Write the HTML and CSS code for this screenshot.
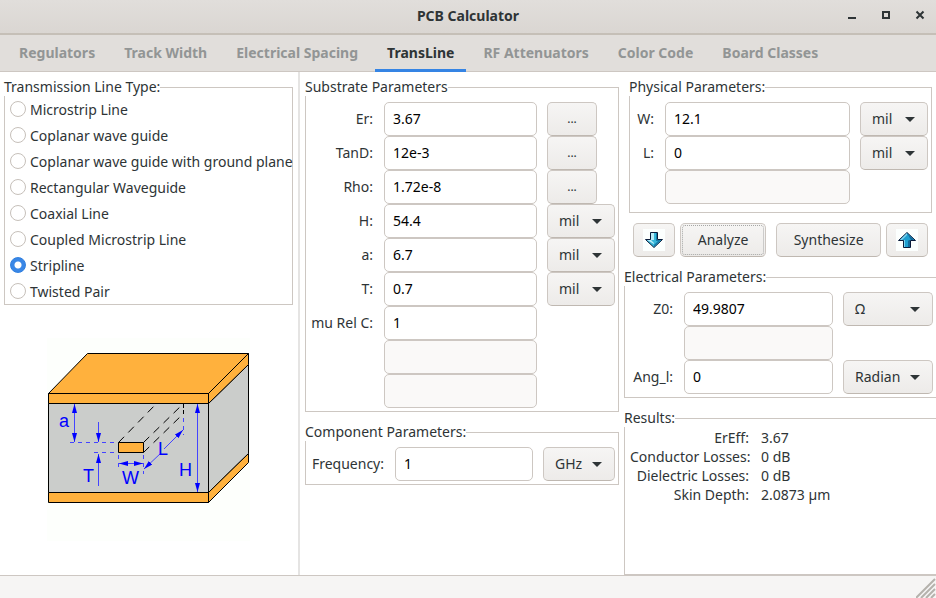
FILE: index.html
```html
<!DOCTYPE html>
<html lang="en">
<head>
<meta charset="utf-8">
<title>PCB Calculator</title>
<link rel="stylesheet" href="styles.css">
</head>
<body>
<header class="titlebar">
  <h1 class="title">PCB Calculator</h1>
  <div class="window-buttons">
    <button type="button" class="window-button" aria-label="Minimize"><svg width="10" height="10" viewBox="0 0 10 10"><path d="M1 7h8v2H1z"/></svg></button>
    <button type="button" class="window-button" aria-label="Maximize"><svg width="10" height="10" viewBox="0 0 10 10"><path fill-rule="evenodd" d="M1 1h8v8H1zM3 3v4h4V3z"/></svg></button>
    <button type="button" class="window-button" aria-label="Close"><svg width="10" height="10" viewBox="0 0 10 10"><path d="M1.500 1.500l7 7M8.500 1.500l-7 7" stroke="#2e3436" stroke-width="2"/></svg></button>
  </div>
</header>
<nav class="tabs">
  <a class="tab" href="#">Regulators</a>
  <a class="tab" href="#">Track Width</a>
  <a class="tab" href="#">Electrical Spacing</a>
  <a class="tab active" href="#" aria-current="page">TransLine</a>
  <a class="tab" href="#">RF Attenuators</a>
  <a class="tab" href="#">Color Code</a>
  <a class="tab" href="#">Board Classes</a>
</nav>
<main class="content">
  <section class="pane type-pane">
    <fieldset class="group">
      <legend>Transmission Line Type:</legend>
      <div class="radios">
        <label class="radio"><input type="radio" name="line">Microstrip Line</label>
        <label class="radio"><input type="radio" name="line">Coplanar wave guide</label>
        <label class="radio"><input type="radio" name="line">Coplanar wave guide with ground plane</label>
        <label class="radio"><input type="radio" name="line">Rectangular Waveguide</label>
        <label class="radio"><input type="radio" name="line">Coaxial Line</label>
        <label class="radio"><input type="radio" name="line">Coupled Microstrip Line</label>
        <label class="radio"><input type="radio" name="line" checked>Stripline</label>
        <label class="radio"><input type="radio" name="line">Twisted Pair</label>
      </div>
    </fieldset>
    <svg class="diagram" width="203" height="203" viewBox="0 0 203 203" role="img" aria-label="Stripline cross-section">
      <defs>
        <marker id="tip" viewBox="0 0 9 5" refX="9" refY="2.5" markerWidth="9" markerHeight="5" markerUnits="userSpaceOnUse" orient="auto-start-reverse"><path d="M0 0l9 2.500-9 2.500z" fill="#00f"/></marker>
      </defs>
      <path fill="#fdfffc" d="M0 0h203v203H0z"/>
      <g stroke="#000" stroke-linejoin="round">
        <path fill="#cbcdcb" d="M1.500 65.500h160v89H1.500zM161.500 65.500l40-39v89l-40 39z"/>
        <path fill="#ffb13d" d="M1.500 55.500l39-40h161l-40 40zM1.500 55.500h160v10H1.500zM161.500 55.500l40-40v11l-40 39zM1.500 154.500h160v10H1.500zM161.500 154.500l40-39v9l-40 40zM71.500 104.500h25v10h-25z"/>
        <path fill="none" stroke-dasharray="8 6" d="M71.500 104.500l38-39M96.500 104.500l40-39M96.500 114.500l40-39"/>
        <path fill="none" stroke-dasharray="4 2" d="M136.500 66v11"/>
      </g>
      <g stroke="#44f" fill="none">
        <path stroke-dasharray="4 4" d="M23 104.500h48M47 114.500h24M71.500 117v12M96.500 117v19M136.500 80v17"/>
        <path marker-start="url(#tip)" marker-end="url(#tip)" d="M27.500 66v38"/>
        <path marker-start="url(#tip)" marker-end="url(#tip)" d="M72 125.500h24"/>
        <path marker-start="url(#tip)" marker-end="url(#tip)" d="M150.500 66v88"/>
        <path marker-start="url(#tip)" d="M97 131l17-16"/>
        <path marker-end="url(#tip)" d="M117 111l19-19"/>
        <path marker-end="url(#tip)" d="M51.500 84v20"/>
        <path marker-end="url(#tip)" d="M51.500 148v-32"/>
      </g>
      <g class="diagram-text">
        <text x="12" y="89">a</text>
        <text x="36" y="144">T</text>
        <text x="75" y="146">W</text>
        <text x="111" y="117">L</text>
        <text x="132" y="138">H</text>
      </g>
    </svg>
  </section>

  <section class="pane">
    <fieldset class="group">
      <legend>Substrate Parameters</legend>
      <div class="rows substrate">
        <label for="er">Er:</label><input id="er" type="text" value="3.67"><button type="button" class="button more" aria-label="Er values">...</button>
        <label for="tand">TanD:</label><input id="tand" type="text" value="12e-3"><button type="button" class="button more" aria-label="TanD values">...</button>
        <label for="rho">Rho:</label><input id="rho" type="text" value="1.72e-8"><button type="button" class="button more" aria-label="Rho values">...</button>
        <label for="h">H:</label><input id="h" type="text" value="54.4"><span class="select"><select aria-label="H unit"><option>mil</option></select></span>
        <label for="a">a:</label><input id="a" type="text" value="6.7"><span class="select"><select aria-label="a unit"><option>mil</option></select></span>
        <label for="t">T:</label><input id="t" type="text" value="0.7"><span class="select"><select aria-label="T unit"><option>mil</option></select></span>
        <label for="mu">mu Rel C:</label><input id="mu" type="text" value="1">
        <input class="unlabelled" type="text" disabled aria-label="Unused substrate parameter 1">
        <input class="unlabelled" type="text" disabled aria-label="Unused substrate parameter 2">
      </div>
    </fieldset>
    <fieldset class="group">
      <legend>Component Parameters:</legend>
      <div class="rows component">
        <label for="freq">Frequency:</label><input id="freq" type="text" value="1"><span class="select"><select aria-label="Frequency unit"><option>GHz</option></select></span>
      </div>
    </fieldset>
  </section>

  <section class="pane">
    <div class="inset">
      <fieldset class="group">
        <legend>Physical Parameters:</legend>
        <div class="rows physical">
          <label for="w">W:</label><input id="w" type="text" value="12.1"><span class="select"><select aria-label="W unit"><option>mil</option></select></span>
          <label for="l">L:</label><input id="l" type="text" value="0"><span class="select"><select aria-label="L unit"><option>mil</option></select></span>
          <input class="unlabelled" type="text" disabled aria-label="Unused physical parameter">
        </div>
      </fieldset>
      <div class="actions">
        <button type="button" class="button arrow" aria-label="Analyze down"><svg width="22" height="22" viewBox="0 0 22 22"><path fill="#fcfffe" d="M0 0h22v22H0z"/><path fill="#35b6d8" stroke="#0a1a3a" d="M7.500 3.500h7v7h5l-8.500 8-8.500-8h5z"/><path fill="#b8ecf8" d="M8 4h3v7H8zM4 11h4l3 3v1z"/><path fill="#1479a8" d="M13 4h1v7h4l-7 7v-2l4-4h-2z"/></svg></button>
        <button type="button" class="button analyze">Analyze</button>
        <button type="button" class="button synthesize">Synthesize</button>
        <button type="button" class="button arrow" aria-label="Synthesize up"><svg width="22" height="22" viewBox="0 0 22 22"><path fill="#fcfffe" d="M0 0h22v22H0z"/><path fill="#1e9fd0" stroke="#0a1a3a" d="M7.500 18.500h7v-7h5l-8.500-8-8.500 8h5z"/><path fill="#7fd3ee" d="M8 11h1v7H8zM11 4v2l-5 5H4z"/><path fill="#126a9c" d="M13 11h1v7h-2v-6zM11 4l7 7h-3z"/></svg></button>
      </div>
    </div>
    <fieldset class="group open">
      <legend>Electrical Parameters:</legend>
      <div class="rows electrical">
        <label for="z0">Z0:</label><input id="z0" type="text" value="49.9807"><span class="select"><select aria-label="Z0 unit"><option>Ω</option></select></span>
        <input class="unlabelled" type="text" disabled aria-label="Unused electrical parameter">
        <label for="ang">Ang_l:</label><input id="ang" type="text" value="0"><span class="select"><select aria-label="Ang_l unit"><option>Radian</option></select></span>
      </div>
    </fieldset>
    <fieldset class="group open results">
      <legend>Results:</legend>
      <dl>
        <dt>ErEff:</dt><dd>3.67</dd>
        <dt>Conductor Losses:</dt><dd>0 dB</dd>
        <dt>Dielectric Losses:</dt><dd>0 dB</dd>
        <dt>Skin Depth:</dt><dd>2.0873 µm</dd>
      </dl>
    </fieldset>
  </section>
</main>
<footer class="statusbar">
  <svg width="20" height="20" viewBox="0 0 20 20" aria-hidden="true"><path d="M0 20L19 1M5 20L19 6M10 20l9-9M15 20l4-4" stroke="#b5b2ac" stroke-width="2"/></svg>
</footer>
</body>
</html>
```
FILE: styles.css
```css
* { box-sizing: border-box; }

body {
  margin: 0;
  min-height: 100vh;
  display: flex;
  flex-direction: column;
  background: #fff;
  color: #2e3436;
  font: 14px/17px "Noto Sans", "Open Sans", sans-serif;
}

input, select, button { font: inherit; color: inherit; margin: 0; }

.titlebar {
  position: relative;
  display: flex;
  align-items: center;
  justify-content: center;
  height: 35px;
  padding-bottom: 2px;
  background: linear-gradient(#e1dedb, #dad6d2);
  border-bottom: 2px solid #c5bfb7;
}
.title { margin: 0; font-size: 14px; }
.window-buttons {
  position: absolute;
  right: 6px;
  top: 5px;
  display: flex;
  gap: 14px;
}
.window-button {
  display: grid;
  place-items: center;
  width: 20px;
  height: 20px;
  padding: 0;
  border: 0;
  background: none;
}
.window-button svg { fill: #2e3436; }

.tabs {
  display: flex;
  gap: 5px;
  height: 37px;
  padding-left: 7px;
  background: #e1dedb;
  border-bottom: 1px solid #cdc7c2;
}
.tab {
  height: 37px;
  padding: 9px 12px 0;
  color: #929595;
  font-weight: bold;
  text-decoration: none;
  white-space: nowrap;
}
.tab.active { color: #2e3436; border-bottom: 3px solid #3584e4; }

.content {
  flex: 1;
  display: grid;
  grid-template-columns: 300px minmax(0, 314fr) minmax(0, 312fr);
  column-gap: 5px;
}
.pane {
  display: flex;
  flex-direction: column;
  gap: 12px;
  padding-top: 7px;
}
.type-pane {
  gap: 33px;
  padding-left: 4px;
  padding-right: 5px;
  border-right: 2px solid #e5e4e3;
}

.group {
  min-width: 0;
  margin: 0;
  padding: 0;
  border: 1px solid #cdc7c2;
}
.group legend {
  margin-left: -1px;
  padding: 0 0 2px;
  line-height: 15px;
  background: #fff;
}
.group.open { border-right: 0; }

.radio {
  display: flex;
  align-items: center;
  gap: 4px;
  height: 26px;
  padding-left: 5px;
  white-space: nowrap;
}
.radio input {
  appearance: none;
  flex: none;
  width: 16px;
  height: 16px;
  border: 1px solid #c6c0ba;
  border-radius: 50%;
  background: #fff;
}
.radio input:checked {
  border-color: #2f7fe0;
  background: radial-gradient(circle, #fff 3px, #3a87e6 4px);
}

.diagram { align-self: center; }
.diagram-text { fill: #00f; font: 18px "Liberation Sans", sans-serif; }

.rows {
  display: grid;
  column-gap: 10px;
  grid-auto-rows: 34px;
  align-items: center;
  padding: 6px 3px 3px 5px;
}
.rows label { grid-column: 1; text-align: right; white-space: nowrap; padding: 0 1px 2px 0; }
.unlabelled { grid-column: 2; }
.substrate { grid-template-columns: 63px minmax(0, 1fr) 68px; }
.component { grid-template-columns: 74px minmax(0, 1fr) 72px; }
.physical { grid-template-columns: 20px minmax(0, 1fr) 68px; padding-bottom: 8px; }
.electrical { grid-template-columns: 44px minmax(0, 1fr) 90px; }

.rows input {
  width: 100%;
  height: 34px;
  padding: 0 8px 2px;
  border: 1px solid #cdc7c2;
  border-radius: 5px;
  background: #fff;
  color: #000;
}
.rows input:disabled { background: #faf9f8; }

.button, .select select {
  height: 34px;
  padding: 0 11px 1px;
  border: 1px solid #cdc7c2;
  border-bottom-color: #bfb8b1;
  border-radius: 5px;
  background: linear-gradient(#f6f5f4, #edebe9);
  white-space: nowrap;
}
.button.more { width: 50px; font-size: 12px; }

.select { position: relative; }
.select select { display: block; appearance: none; width: 100%; }
.select::after {
  content: "";
  position: absolute;
  right: 13px;
  top: 15px;
  border: 5px solid transparent;
  border-top-color: #2e3436;
  border-bottom: 0;
  pointer-events: none;
}

.inset { padding: 0 4px 0 5px; }
.actions {
  display: flex;
  gap: 5px;
  padding: 10px 4px 0;
}
.button.arrow { width: 42px; padding: 0; }
.arrow svg { display: block; margin: 0 auto; }
.button.analyze { flex: 86; margin-right: 5px; padding: 0 0 1px; outline: 1px dotted #a5a6a5; outline-offset: -3px; }
.button.synthesize { flex: 105; padding: 0 0 1px; }

.results { flex: 1; }
.results dl {
  display: grid;
  grid-template-columns: 119px 1fr;
  column-gap: 12px;
  margin: 0;
  padding: 1px 0 0 5px;
  line-height: 19px;
}
.results dt { text-align: right; white-space: nowrap; }
.results dd { margin: 0; }

.statusbar {
  display: flex;
  justify-content: flex-end;
  align-items: flex-end;
  height: 23px;
  border-top: 1px solid #cdc7c2;
  background: #f6f5f4;
}
.statusbar svg { display: block; }
```
